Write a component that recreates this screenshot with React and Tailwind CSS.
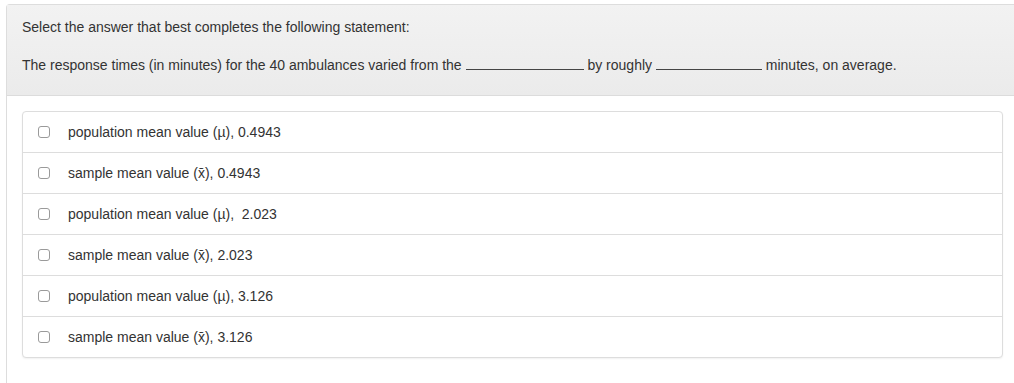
import React from 'react';

const options = [
  'population mean value (\u00b5), 0.4943',
  'sample mean value (x\u0304), 0.4943',
  'population mean value (\u00b5),  2.023',
  'sample mean value (x\u0304), 2.023',
  'population mean value (\u00b5), 3.126',
  'sample mean value (x\u0304), 3.126',
];

function Blank({ w }) {
  return <span className={`inline-block border-b border-[#444] align-baseline h-[12px] ${w}`}></span>;
}

export default function App() {
  return (
    <div className="w-[1014px] h-[383px] bg-white overflow-hidden pl-[6px] pt-[4px] text-[14px] text-[#333]" style={{ fontFamily: '"Liberation Sans", Arial, sans-serif' }}>
      <div className="h-[400px] w-[1020px] border-l border-t border-[#ddd] rounded-tl-[4px]">
        <div className="h-[91px] bg-gradient-to-b from-[#f2f2f2] to-[#ebebeb] border-b border-[#dcdcdc] pl-[15px] pt-[14px]">
          <p className="leading-[17px]">Select the answer that best completes the following statement:</p>
          <p className="leading-[17px] mt-[21px]">
            The response times (in minutes) for the 40 ambulances varied from the <Blank w="w-[118px]" /> by roughly <Blank w="w-[106px]" /> minutes, on average.
          </p>
        </div>
        <div className="pl-[15px] pt-[15px]">
          <div className="w-[981px] border border-[#ddd] rounded-[4px] shadow-[0_1px_2px_rgba(0,0,0,0.06)] bg-white">
            {options.map((o, i) => (
              <label key={i} className={`flex items-center h-[40px] pl-[15px] ${i > 0 ? 'border-t border-[#ddd] h-[41px]' : ''}`}>
                <span className="w-[12px] h-[12px] border border-[#9a9a9a] rounded-[3px] bg-white shrink-0"></span>
                <span className="ml-[18px] whitespace-pre">{o}</span>
              </label>
            ))}
          </div>
        </div>
      </div>
    </div>
  );
}
